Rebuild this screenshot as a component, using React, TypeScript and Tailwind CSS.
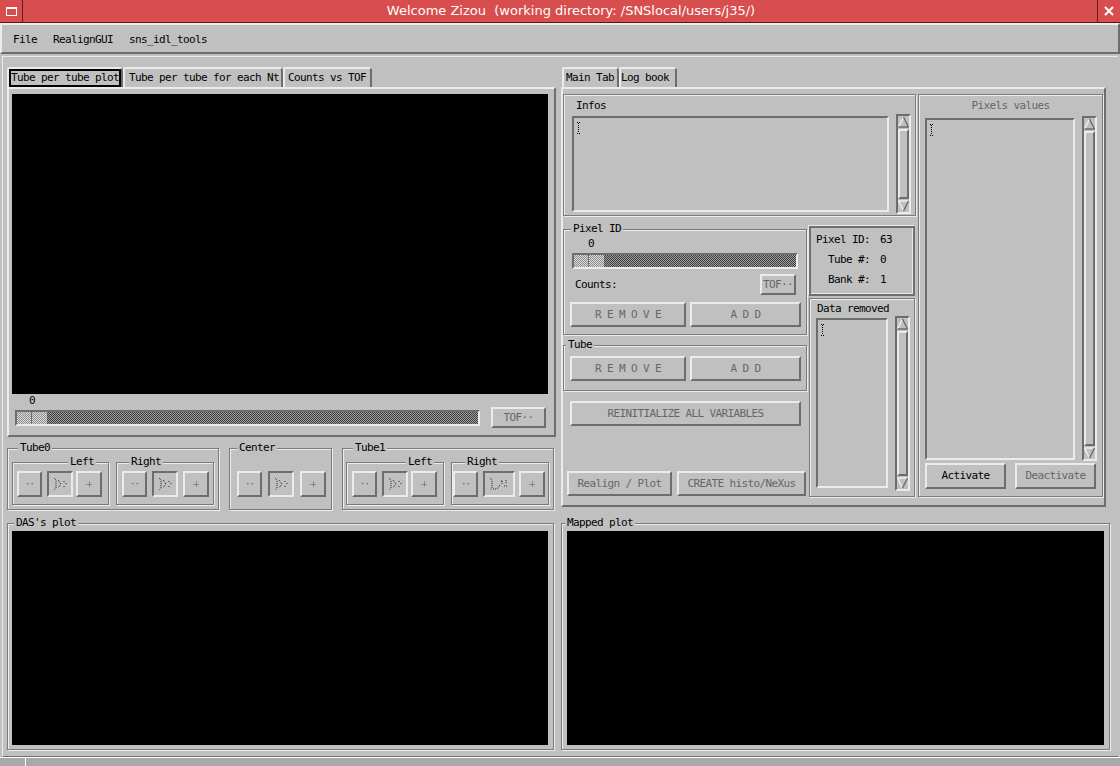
import React from "react";

const F = "font-['DejaVu_Sans_Mono',monospace] text-[11px] leading-[12px] tracking-[-0.62px] whitespace-pre";
const RAISED = "border-2 border-t-[#ebebeb] border-l-[#ebebeb] border-r-[#6d6d6d] border-b-[#6d6d6d]";
const SUNKEN = "border-2 border-t-[#6d6d6d] border-l-[#6d6d6d] border-r-[#ebebeb] border-b-[#ebebeb]";
const ETCH = "border border-[#7a7a7a] shadow-[inset_1px_1px_0_#ececec,1px_1px_0_#ececec]";

type P = { cls?: string; children?: React.ReactNode };

function Btn({ cls = "", children, dis, pressed }: P & { dis?: boolean; pressed?: boolean }) {
  return (
    <div
      className={`${cls} ${pressed ? SUNKEN : RAISED} shrink-0 flex items-center justify-center ${F} ${
        dis ? "text-[#666666]" : "text-black"
      }`}
    >
      {children}
    </div>
  );
}

function Frame({ cls = "", legend, lcls = "", children }: P & { legend: string; lcls?: string }) {
  return (
    <fieldset className={`${ETCH} ${cls} shrink-0 min-w-0`}>
      <legend className={`${F} text-black bg-[#c0c0c0] px-[2px] ${lcls}`}>{legend}</legend>
      {children}
    </fieldset>
  );
}

function IBeam() {
  return (
    <svg width="5" height="12" viewBox="0 0 5 12">
      <path d="M1 0.5 H4 M1 11.5 H4" stroke="#000" strokeWidth="1" strokeDasharray="1 1" />
      <path d="M2.5 1 V11" stroke="#000" strokeWidth="1" strokeDasharray="1 1" />
    </svg>
  );
}

function TextArea({ cls = "" }: P) {
  return (
    <div className={`${cls} ${SUNKEN} shrink-0 pl-[2px] pt-[4px]`}>
      <IBeam />
    </div>
  );
}

function VScroll({ cls = "" }: P) {
  return (
    <div
      className={`${cls} w-[15px] shrink-0 flex flex-col items-center border-2 border-t-[#6d6d6d] border-l-[#6d6d6d] border-r-[#ebebeb] border-b-[#ebebeb]`}
    >
      <svg width="11" height="12" viewBox="0 0 11 12" className="shrink-0">
        <polygon points="5.5,1 10.5,11 0.5,11" fill="#c0c0c0" />
        <path d="M0.5 11 L5.5 1" stroke="#f0f0f0" strokeWidth="1.4" fill="none" />
        <path d="M5.5 1 L10.5 11 L0.5 11" stroke="#6d6d6d" strokeWidth="1.4" fill="none" />
      </svg>
      <div className={`flex-1 w-full border-2 border-t-[#ebebeb] border-l-[#ebebeb] border-r-[#6d6d6d] border-b-[#6d6d6d] my-[1px]`} />
      <svg width="11" height="12" viewBox="0 0 11 12" className="shrink-0">
        <polygon points="0.5,1 10.5,1 5.5,11" fill="#c0c0c0" />
        <path d="M5.5 11 L0.5 1 L10.5 1" stroke="#f0f0f0" strokeWidth="1.4" fill="none" />
        <path d="M10.5 1 L5.5 11" stroke="#6d6d6d" strokeWidth="1.4" fill="none" />
      </svg>
    </div>
  );
}

function Trough({ cls = "" }: P) {
  return (
    <div
      className={`${cls} shrink-0 flex border-2 border-t-[#6d6d6d] border-l-[#6d6d6d] border-r-[#ebebeb] border-b-[#ebebeb] bg-[repeating-conic-gradient(#3e3e3e_0_25%,#9e9e9e_0_50%)] bg-[length:2px_2px]`}
    >
      <div className="w-[30px] h-full flex bg-[repeating-conic-gradient(#8c8c8c_0_25%,#dcdcdc_0_50%)] bg-[length:2px_2px]">
        <div className="w-[15px] h-full border-r border-[#6d6d6d]" />
      </div>
    </div>
  );
}

function Tab({ cls = "", children, sel, pl = "" }: P & { sel?: boolean; pl?: string }) {
  return (
    <div
      className={`${cls} h-[20px] shrink-0 flex border-t-2 border-l-2 border-r-2 border-t-[#ebebeb] border-l-[#ebebeb] border-r-[#6d6d6d] rounded-tl-[2px] rounded-tr-[4px] ${F} text-black`}
    >
      {sel ? (
        <div className="flex-1 h-full border-2 border-black flex items-center">{children}</div>
      ) : (
        <div className={`flex-1 h-full flex items-center ${pl}`}>{children}</div>
      )}
    </div>
  );
}

function Glyph({ wide }: { wide?: boolean }) {
  return wide ? (
    <svg width="22" height="14" viewBox="0 0 22 14" fill="none" stroke="#222" strokeWidth="1" strokeDasharray="1 1">
      <path d="M2 1 L4 3 L4 11 L2 13" />
      <path d="M5 12 L9 12 L12 8" />
      <path d="M13 4 L15 4 M14 4 L14 8 M16 9 L19 9 M18 3 L18 6" />
    </svg>
  ) : (
    <svg width="16" height="14" viewBox="0 0 16 14" fill="none" stroke="#222" strokeWidth="1" strokeDasharray="1 1">
      <path d="M2 1 L4 3 L4 11 L2 13" />
      <path d="M6 3 L9 7 L6 11" />
      <path d="M12 4 L12 5 M12 9 L12 10 M14 6 L14 8" />
    </svg>
  );
}

function Minus() {
  return <span className="text-[#555] text-[9px] leading-[9px] tracking-[-1px]">··</span>;
}
function Plus() {
  return (
    <svg width="7" height="7" viewBox="0 0 7 7">
      <path d="M3.5 0.5 V6.5 M0.5 3.5 H6.5" stroke="#555" strokeWidth="1" strokeDasharray="1 1" />
    </svg>
  );
}

function Triple({ pad, gapA, gapB, wide }: { pad: string; gapA: string; gapB: string; wide?: boolean }) {
  return (
    <div className={`flex ${pad}`}>
      <Btn cls="w-[25px] h-[26px]">
        <Minus />
      </Btn>
      <Btn cls={`${wide ? "w-[32px]" : "w-[26px]"} h-[26px] ${gapA}`} pressed>
        <Glyph wide={wide} />
      </Btn>
      <Btn cls={`w-[26px] h-[26px] ${gapB}`}>
        <Plus />
      </Btn>
    </div>
  );
}

export default function App() {
  return (
    <div className="w-[1120px] h-[766px] bg-[#c0c0c0] flex flex-col overflow-hidden">
      {/* Title bar */}
      <div className="h-[23px] shrink-0 bg-[#d84d4d] flex border-b border-[#4a1e1e]">
        <div className="w-[23px] border-r border-[#5a2020] flex items-center justify-center">
          <div className="w-[11px] h-[9px] border border-white border-t-2" />
        </div>
        <div className="flex-1 text-center text-white font-['DejaVu_Sans',sans-serif] text-[13px] leading-[22px] whitespace-pre pl-[22px]">
          Welcome Zizou  (working directory: /SNSlocal/users/j35/)
        </div>
        <div className="w-[23px] border-l border-[#5a2020] flex items-center justify-center">
          <svg width="10" height="10" viewBox="0 0 10 10">
            <path d="M1 1 L9 9 M9 1 L1 9" stroke="#fff" strokeWidth="2" />
          </svg>
        </div>
      </div>

      {/* Menu bar */}
      <div
        className={`h-[31px] shrink-0 flex items-center gap-[16px] pl-[11px] pt-[2px] border-2 border-t-[#ebebeb] border-l-[#ebebeb] border-r-[#6d6d6d] border-b-[#6d6d6d] ${F} text-black`}
      >
        <span>File</span>
        <span>RealignGUI</span>
        <span>sns_idl_tools</span>
      </div>

      {/* Main */}
      <div className="flex-1 mt-[2px] mx-[2px] border-t border-l border-[#ebebeb] border-b border-b-[#6d6d6d] flex flex-col pl-[4px] pt-[10px]">
        {/* Top row */}
        <div className="h-[443px] flex items-start gap-[5px] shrink-0">
          {/* Left column */}
          <div className="w-[549px] flex flex-col shrink-0">
            <div className="h-[20px] flex">
              <Tab cls="w-[116px]" sel>
                Tube per tube plot
              </Tab>
              <Tab cls="w-[160px]" pl="pl-[4px]">
                Tube per tube for each Nt
              </Tab>
              <Tab cls="w-[89px]" pl="pl-[3px]">
                Counts vs TOF
              </Tab>
            </div>
            <div className={`h-[350px] ${RAISED} flex flex-col`}>
              <div className="ml-[3px] mt-[5px] w-[536px] h-[300px] bg-black" />
              <div className={`${F} text-black pl-[20px] h-[13px] pt-[1px]`}>0</div>
              <div className="flex items-center pl-[6px]">
                <Trough cls="w-[465px] h-[16px]" />
                <Btn cls="ml-[11px] w-[55px] h-[21px]" dis>
                  TOF··
                </Btn>
              </div>
            </div>
            {/* Tube controls */}
            <div className="flex gap-[10px] mt-[5px]">
              <Frame cls="w-[212px] h-[68px]" legend="Tube0" lcls="ml-[10px]">
                <div className="flex gap-[7px] pl-[4px] mt-[2px]">
                  <Frame cls="w-[97px] h-[49px]" legend="Left" lcls="ml-[55px] px-[1px]">
                    <div className="mt-[3px]">
                      <Triple pad="pl-[4px]" gapA="ml-[5px]" gapB="ml-[3px]" />
                    </div>
                  </Frame>
                  <Frame cls="w-[98px] h-[49px]" legend="Right" lcls="ml-[12px] px-[1px]">
                    <div className="mt-[3px]">
                      <Triple pad="pl-[5px]" gapA="ml-[5px]" gapB="ml-[5px]" />
                    </div>
                  </Frame>
                </div>
              </Frame>
              <Frame cls="w-[103px] h-[68px]" legend="Center" lcls="ml-[7px]">
                <div className="mt-[17px]">
                  <Triple pad="pl-[7px]" gapA="ml-[6px]" gapB="ml-[6px]" />
                </div>
              </Frame>
              <Frame cls="w-[212px] h-[68px]" legend="Tube1" lcls="ml-[10px]">
                <div className="flex gap-[7px] pl-[3px] mt-[2px]">
                  <Frame cls="w-[98px] h-[49px]" legend="Left" lcls="ml-[59px] px-[1px]">
                    <div className="mt-[3px]">
                      <Triple pad="pl-[5px]" gapA="ml-[5px]" gapB="ml-[3px]" />
                    </div>
                  </Frame>
                  <Frame cls="w-[98px] h-[49px]" legend="Right" lcls="ml-[13px] px-[1px]">
                    <div className="mt-[3px]">
                      <Triple pad="pl-[1px]" gapA="ml-[5px]" gapB="ml-[4px]" wide />
                    </div>
                  </Frame>
                </div>
              </Frame>
            </div>
          </div>

          {/* Right column */}
          <div className="w-[550px] flex flex-col shrink-0">
            <div className="h-[20px] flex pl-[1px]">
              <Tab cls="w-[57px]" pl="pl-[2px]">
                Main Tab
              </Tab>
              <Tab cls="w-[58px]" pl="pl-[0px]">
                Log book
              </Tab>
            </div>
            <div className={`w-[545px] h-[420px] ${RAISED} flex items-start`}>
              {/* left part */}
              <div className="w-[354px] flex flex-col shrink-0">
                <div className={`${ETCH} mt-[5px] w-[353px] h-[122px] flex flex-col`}>
                  <div className={`${F} text-black pl-[12px] pt-[5px]`}>Infos</div>
                  <div className="flex items-start pl-[8px]">
                    <TextArea cls="w-[317px] h-[96px] mt-[4px]" />
                    <VScroll cls="h-[100px] mt-[2px] ml-[7px]" />
                  </div>
                </div>
                <div className="flex mt-[2px]">
                  {/* left sub column */}
                  <div className="w-[245px] flex flex-col shrink-0">
                    <Frame cls="mt-[5px] w-[244px] h-[112px]" legend="Pixel ID" lcls="ml-[7px]">
                      <div className={`${F} text-black pl-[24px] mt-[3px]`}>0</div>
                      <Trough cls="ml-[8px] mt-[3px] w-[226px] h-[16px]" />
                      <div className="flex items-center mt-[5px] h-[21px]">
                        <span className={`${F} text-black pl-[11px]`}>Counts:</span>
                        <Btn cls="ml-auto mr-[10px] w-[36px] h-[21px]" dis>
                          TOF··
                        </Btn>
                      </div>
                      <div className="flex mt-[7px] pl-[6px] gap-[4px]">
                        <Btn cls="w-[116px] h-[25px]" dis>
                          R E M O V E
                        </Btn>
                        <Btn cls="w-[111px] h-[25px]" dis>
                          A D D
                        </Btn>
                      </div>
                    </Frame>
                    <Frame cls="mt-[4px] w-[244px] h-[52px]" legend="Tube" lcls="ml-[2px]">
                      <div className="flex mt-[5px] pl-[6px] gap-[4px]">
                        <Btn cls="w-[116px] h-[25px]" dis>
                          R E M O V E
                        </Btn>
                        <Btn cls="w-[111px] h-[25px]" dis>
                          A D D
                        </Btn>
                      </div>
                    </Frame>
                    <Btn cls="mt-[10px] ml-[7px] w-[231px] h-[25px]" dis>
                      REINITIALIZE ALL VARIABLES
                    </Btn>
                    <div className="flex mt-[45px] ml-[4px] gap-[5px]">
                      <Btn cls="w-[105px] h-[25px]" dis>
                        Realign / Plot
                      </Btn>
                      <Btn cls="w-[129px] h-[25px]" dis>
                        CREATE histo/NeXus
                      </Btn>
                    </div>
                  </div>
                  {/* right sub column */}
                  <div className="w-[108px] flex flex-col shrink-0">
                    <div className="mt-[8px] ml-[1px] w-[106px] h-[70px] border-2 border-[#707070] shadow-[inset_-1px_-1px_0_#e8e8e8,-1px_-1px_0_#e8e8e8] flex flex-col pt-[2px]">
                      {[
                        ["Pixel ID:", "63"],
                        ["Tube #:", "0"],
                        ["Bank #:", "1"],
                      ].map(([a, b]) => (
                        <div key={a} className={`h-[20px] flex items-center ${F} text-black`}>
                          <span className="w-[59px] text-right">{a}</span>
                          <span className="ml-[10px]">{b}</span>
                        </div>
                      ))}
                    </div>
                    <div className={`${ETCH} mt-[2px] ml-[1px] w-[106px] h-[199px] flex flex-col`}>
                      <div className={`${F} text-black pl-[7px] pt-[4px]`}>Data removed</div>
                      <div className="flex items-start pl-[6px]">
                        <TextArea cls="w-[72px] h-[170px] mt-[3px]" />
                        <VScroll cls="h-[175px] mt-[1px] ml-[7px]" />
                      </div>
                    </div>
                  </div>
                </div>
              </div>
              {/* Pixels values */}
              <div className={`${ETCH} mt-[5px] ml-[1px] w-[185px] h-[403px] flex flex-col shrink-0`}>
                <div className={`${F} text-[#666666] text-center pt-[5px]`}>Pixels values</div>
                <div className="flex items-start pl-[6px]">
                  <TextArea cls="w-[150px] h-[342px] mt-[6px]" />
                  <VScroll cls="h-[345px] mt-[4px] ml-[7px]" />
                </div>
                <div className="flex pl-[6px] mt-[2px] gap-[9px]">
                  <Btn cls="w-[81px] h-[26px]">Activate</Btn>
                  <Btn cls="w-[81px] h-[26px]" dis>
                    Deactivate
                  </Btn>
                </div>
              </div>
            </div>
          </div>
        </div>

        {/* Bottom row */}
        <div className="flex gap-[7px] mt-[7px] shrink-0">
          <Frame cls="w-[547px] h-[233px]" legend="DAS's plot" lcls="ml-[6px]">
            <div className="ml-[4px] mt-[2px] w-[536px] h-[214px] bg-black" />
          </Frame>
          <Frame cls="w-[549px] h-[233px]" legend="Mapped plot" lcls="ml-[3px]">
            <div className="ml-[5px] mt-[2px] w-[537px] h-[214px] bg-black" />
          </Frame>
        </div>
      </div>

      {/* Status bar */}
      <div className="h-[9px] shrink-0 bg-[#a9a9a9] border-t border-white flex">
        <div className="w-[26px] border-r border-white" />
      </div>
    </div>
  );
}
